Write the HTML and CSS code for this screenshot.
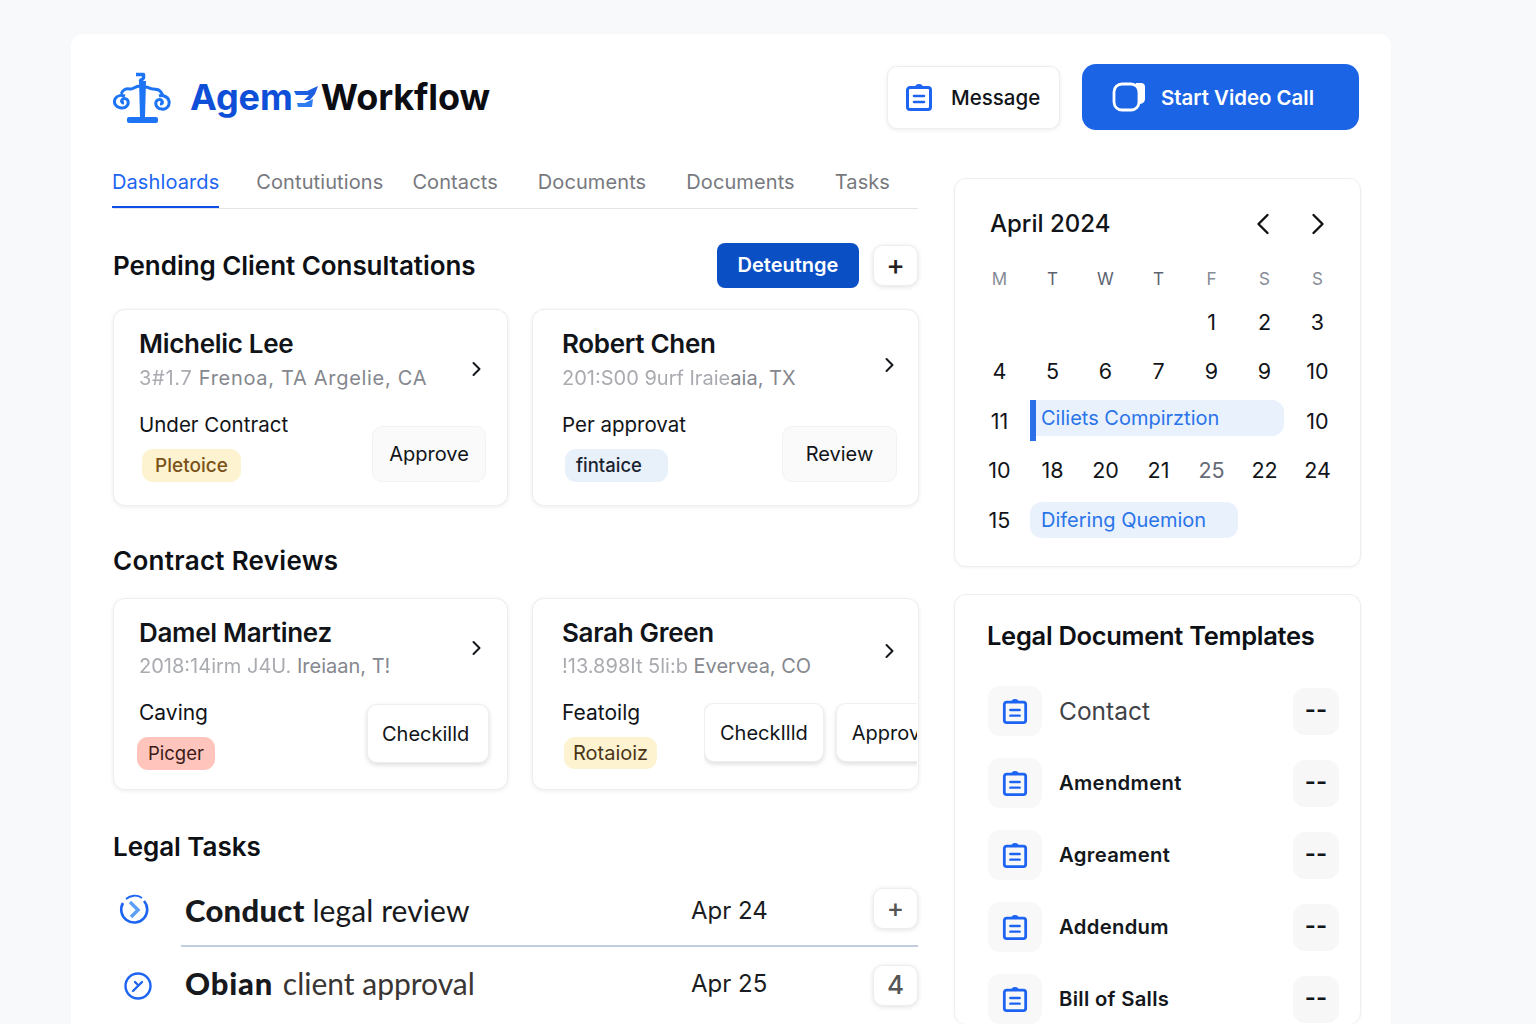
FILE: index.html
```html
<!DOCTYPE html>
<html lang="en">
<head>
    <meta charset="UTF-8">
    <meta name="viewport" content="width=device-width, initial-scale=1.0">
    <title>Agem Workflow</title>
    <link rel="stylesheet" href="styles.css">
</head>
<body>
    <svg class="defs" width="0" height="0" aria-hidden="true">
        <symbol id="clip" viewBox="0 0 28 28">
            <path d="M5 4.500h18a2.500 2.500 0 0 1 2.500 2.500v17a2.500 2.500 0 0 1-2.500 2.500H5A2.500 2.500 0 0 1 2.500 24V7A2.500 2.500 0 0 1 5 4.500z" fill="none" stroke="#1d64f2" stroke-width="3"/>
            <path d="M10 5a4 4 0 0 1 8 0z" fill="#1d64f2"/>
            <path d="M9 13h10M9 19h10" fill="none" stroke="#1d64f2" stroke-width="2.600" stroke-linecap="round"/>
        </symbol>
        <symbol id="chev" viewBox="0 0 12 16">
            <path d="M2.500 2l6 6-6 6" fill="none" stroke="currentColor" stroke-width="2" stroke-linecap="round" stroke-linejoin="round"/>
        </symbol>
    </svg>

    <div class="panel">
        <header class="top">
            <div class="brand">
                <svg class="brand-icon" width="58" height="52" viewBox="0 0 58 52">
                    <path d="M23 2.500h7.500v3.500l-3 2.500h3" fill="none" stroke="#1d74f5" stroke-width="3.500" stroke-linejoin="round"/>
                    <path d="M26 9h7l-1 36h-5z" fill="#1d74f5"/>
                    <rect x="14" y="45" width="31" height="6" rx="2" fill="#1d74f5"/>
                    <path d="M27 14c-5 0-6 3-9 3-2 0-5-1-7 1-2 1-2 3-3 4" fill="none" stroke="#1d74f5" stroke-width="3"/>
                    <path d="M32 15c4 0 5 2 8 2 3 0 5 0 7 2s2 3 3 5" fill="none" stroke="#1d74f5" stroke-width="3"/>
                    <path d="M12 24c-3-1-8-1-10 3-2 5 2 9 7 9 4 0 7-3 6-7-1-3-5-3-6-1-1 1 0 3 2 3" fill="none" stroke="#1d74f5" stroke-width="3"/>
                    <path d="M46 24c3-1 9 0 10 5 1 5-3 9-7 8-4 0-7-3-6-7 1-3 5-3 6-1 1 2 0 3-2 3" fill="none" stroke="#1d74f5" stroke-width="3"/>
                </svg>
                <div class="brand-name">
                    <span class="brand-blue">Agem</span>
                    <svg class="brand-mark" width="26" height="26" viewBox="0 0 26 26">
                        <path d="M1 7h13L25 2l-3 8-5 6h-6l5-5H3z" fill="#1d5fe0"/>
                        <path d="M4 19h8l8-4-1 8H5z" fill="#2f7bf0"/>
                    </svg>
                    <span>Workflow</span>
                </div>
            </div>
            <div class="top-actions">
                <button class="btn-message">
                    <svg width="28" height="28"><use href="#clip"/></svg>
                    Message
                </button>
                <button class="btn-video">
                    <svg width="34" height="30" viewBox="0 0 34 30">
                        <path d="M24 2h5a3 3 0 0 1 3 3v12a4 4 0 0 1-4 4" fill="#fff" stroke="#fff" stroke-width="2"/>
                        <rect x="2" y="2" width="25" height="26" rx="8" fill="#1c64e6" stroke="#fff" stroke-width="2.800"/>
                    </svg>
                    Start Video Call
                </button>
            </div>
        </header>

        <div class="columns">
            <main class="left">
                <nav class="tabs">
                    <a class="tab tab-first active" href="#">Dashloards</a>
                    <a class="tab tab-tight" href="#">Contutiutions</a>
                    <a class="tab" href="#">Contacts</a>
                    <a class="tab" href="#">Documents</a>
                    <a class="tab" href="#">Documents</a>
                    <a class="tab" href="#">Tasks</a>
                </nav>

                <div class="section-head">
                    <h2>Pending Client Consultations</h2>
                    <div class="section-actions">
                        <button class="btn-primary">Deteutnge</button>
                        <button class="btn-icon">+</button>
                    </div>
                </div>

                <div class="cards">
                    <div class="card">
                        <div class="card-head">
                            <div>
                                <div class="name">Michelic Lee</div>
                                <div class="addr addr-wide"><span class="smudge">3#1.7</span> Frenoa, TA Argelie, CA</div>
                            </div>
                            <svg class="chev chev-a" width="12" height="16"><use href="#chev"/></svg>
                        </div>
                        <div class="card-foot">
                            <div>
                                <div class="status">Under Contract</div>
                                <span class="tag tag-yellow">Pletoice</span>
                            </div>
                            <button class="btn-soft">Approve</button>
                        </div>
                    </div>
                    <div class="card card-wide">
                        <div class="card-head">
                            <div>
                                <div class="name">Robert Chen</div>
                                <div class="addr"><span class="smudge">201:S00 9urf Iraie</span>aia, TX</div>
                            </div>
                            <svg class="chev chev-b" width="12" height="16"><use href="#chev"/></svg>
                        </div>
                        <div class="card-foot">
                            <div>
                                <div class="status">Per approvat</div>
                                <span class="tag tag-blue">fintaice</span>
                            </div>
                            <button class="btn-soft btn-review">Review</button>
                        </div>
                    </div>
                </div>

                <h2 class="section-title">Contract Reviews</h2>

                <div class="cards">
                    <div class="card card-short">
                        <div class="card-head">
                            <div>
                                <div class="name">Damel Martinez</div>
                                <div class="addr"><span class="smudge">2018:14irm J4U.</span> Ireiaan, T!</div>
                            </div>
                            <svg class="chev chev-c" width="12" height="16"><use href="#chev"/></svg>
                        </div>
                        <div class="card-foot">
                            <div>
                                <div class="status">Caving</div>
                                <span class="tag tag-red">Picger</span>
                            </div>
                            <button class="btn-raised btn-check">Checkilld</button>
                        </div>
                    </div>
                    <div class="card card-wide card-short">
                        <div class="card-head">
                            <div>
                                <div class="name">Sarah Green</div>
                                <div class="addr"><span class="smudge">!13.898It 5li:b</span> Evervea, CO</div>
                            </div>
                            <svg class="chev chev-d" width="12" height="16"><use href="#chev"/></svg>
                        </div>
                        <div class="card-foot">
                            <div>
                                <div class="status">Featoilg</div>
                                <span class="tag tag-yellow tag-dark">Rotaioiz</span>
                            </div>
                            <div class="foot-buttons">
                                <button class="btn-raised">CheckIlld</button>
                                <button class="btn-raised">Approve</button>
                            </div>
                        </div>
                    </div>
                </div>

                <h2 class="section-title tasks-title">Legal Tasks</h2>

                <div class="task task-line">
                    <span class="task-icon">
                        <svg width="32" height="32" viewBox="0 0 32 32">
                            <path d="M5 9A13 13 0 1 0 26 7" fill="none" stroke="#1d64f2" stroke-width="2.600"/>
                            <path d="M8 5a13 13 0 0 1 16-1" fill="none" stroke="#1d64f2" stroke-width="1.800"/>
                            <path d="M12 8l8 8-7 7" fill="none" stroke="#5fa0f7" stroke-width="3.500"/>
                        </svg>
                    </span>
                    <div class="task-text"><b>Conduct</b> legal review</div>
                    <div class="task-date">Apr 24</div>
                    <button class="btn-icon btn-task">+</button>
                </div>
                <div class="task task-second">
                    <span class="task-icon task-icon-low">
                        <svg width="30" height="30" viewBox="0 0 30 30">
                            <circle cx="15" cy="15" r="12.500" fill="none" stroke="#1d64f2" stroke-width="2.400"/>
                            <path d="M10 20l9-9M12 11l2 2" fill="none" stroke="#1d64f2" stroke-width="2.400" stroke-linecap="round"/>
                        </svg>
                    </span>
                    <div class="task-text task-text-soft"><b>Obian</b> client approval</div>
                    <div class="task-date">Apr 25</div>
                    <button class="btn-icon btn-task">4</button>
                </div>
            </main>

            <aside class="right">
                <section class="box calendar">
                    <div class="cal-head">
                        <div class="cal-title">April 2024</div>
                        <div class="cal-arrows">
                            <svg width="14" height="22" viewBox="0 0 14 22"><path d="M11.500 2l-9 9 9 9" fill="none" stroke="#111" stroke-width="2.400" stroke-linecap="round" stroke-linejoin="round"/></svg>
                            <svg width="14" height="22" viewBox="0 0 14 22"><path d="M2.500 2l9 9-9 9" fill="none" stroke="#111" stroke-width="2.400" stroke-linecap="round" stroke-linejoin="round"/></svg>
                        </div>
                    </div>
                    <div class="cal-grid cal-week">
                        <span class="wd-light">M</span><span>T</span><span>W</span><span>T</span><span class="wd-light">F</span><span class="wd-light">S</span><span class="wd-light">S</span>
                    </div>
                    <div class="cal-grid cal-days">
                        <span></span><span></span><span></span><span></span><span>1</span><span>2</span><span>3</span>
                        <span>4</span><span>5</span><span>6</span><span>7</span><span>9</span><span>9</span><span>10</span>
                        <span>11</span><div class="event event-bar">Ciliets Compirztion</div><span>10</span>
                        <span>10</span><span>18</span><span>20</span><span>21</span><span class="muted">25</span><span>22</span><span>24</span>
                        <span>15</span><div class="event event-short">Difering Quemion</div>
                    </div>
                </section>

                <section class="box templates">
                    <h3>Legal Document Templates</h3>
                    <div class="tpl">
                        <span class="tpl-icon"><svg width="26" height="28"><use href="#clip"/></svg></span>
                        <span class="tpl-name tpl-plain">Contact</span>
                        <span class="tpl-more">--</span>
                    </div>
                    <div class="tpl">
                        <span class="tpl-icon"><svg width="26" height="28"><use href="#clip"/></svg></span>
                        <span class="tpl-name">Amendment</span>
                        <span class="tpl-more">--</span>
                    </div>
                    <div class="tpl">
                        <span class="tpl-icon"><svg width="26" height="28"><use href="#clip"/></svg></span>
                        <span class="tpl-name">Agreament</span>
                        <span class="tpl-more">--</span>
                    </div>
                    <div class="tpl">
                        <span class="tpl-icon"><svg width="26" height="28"><use href="#clip"/></svg></span>
                        <span class="tpl-name">Addendum</span>
                        <span class="tpl-more">--</span>
                    </div>
                    <div class="tpl">
                        <span class="tpl-icon"><svg width="26" height="28"><use href="#clip"/></svg></span>
                        <span class="tpl-name">Bill of Salls</span>
                        <span class="tpl-more">--</span>
                    </div>
                </section>
            </aside>
        </div>
    </div>
</body>
</html>
```

FILE: styles.css
```css
* {
    box-sizing: border-box;
}
html, body {
    height: 1024px;
    overflow: hidden;
}
body {
    margin: 0;
    padding: 34px 0 0 71px;
    font-family: Inter, "Liberation Sans", sans-serif;
    background-color: #f8f9fb;
    color: #111418;
}
button {
    font-family: inherit;
    cursor: pointer;
}
.defs {
    position: absolute;
}
.panel {
    width: 1320px;
    height: 990px;
    padding: 30px 30px 0 42px;
    background-color: #ffffff;
    border-radius: 12px 12px 0 0;
    overflow: hidden;
}

/* header */
.top {
    display: flex;
    justify-content: space-between;
    align-items: center;
    height: 66px;
    padding-right: 2px;
}
.brand {
    display: flex;
    align-items: center;
    gap: 19px;
}
.brand-icon {
    margin-top: 2px;
}
.brand-name {
    display: flex;
    align-items: center;
    font-size: 36px;
    font-weight: 700;
    letter-spacing: -0.1px;
    color: #0b0d12;
}
.brand-blue {
    color: #0f4fd8;
}
.brand-mark {
    margin: 0 2px 0 0;
}
.top-actions {
    display: flex;
    align-items: center;
    gap: 22px;
}
.btn-message {
    display: flex;
    align-items: center;
    gap: 18px;
    width: 173px;
    height: 63px;
    padding: 0 17px;
    font-size: 20.500px;
    font-weight: 500;
    color: #111418;
    background-color: #ffffff;
    border: 1px solid #eceef1;
    border-radius: 10px;
    box-shadow: 0 1px 4px rgba(0, 0, 0, 0.08);
}
.btn-video {
    display: flex;
    align-items: center;
    gap: 15px;
    width: 277px;
    height: 66px;
    padding: 0 30px;
    font-size: 20.400px;
    font-weight: 600;
    color: #ffffff;
    background-color: #1c64e6;
    border: none;
    border-radius: 14px;
}

/* columns */
.columns {
    display: grid;
    grid-template-columns: 805px 407px;
    gap: 36px;
    margin-top: 35px;
}
.tabs {
    display: flex;
    gap: 40px;
    height: 44px;
    border-bottom: 1px solid #e2e4e8;
}
.tab {
    height: 43px;
    padding-top: 4px;
    font-size: 20px;
    line-height: 26px;
    letter-spacing: 0.1px;
    color: #77797e;
    text-decoration: none;
    white-space: nowrap;
}
.tab-first {
    margin: 0 -3px 0 -1px;
}
.tab-tight {
    margin-right: -11px;
}
.tab.active {
    color: #1d64f2;
    border-bottom: 2px solid #0f4fe8;
}
.section-head {
    display: flex;
    justify-content: space-between;
    align-items: center;
    height: 46px;
    margin-top: 33px;
}
h2 {
    margin: 0;
    font-size: 26px;
    font-weight: 600;
    letter-spacing: -0.05px;
    color: #0d1015;
}
.section-title {
    margin: 38px 0 21px;
    line-height: 33px;
    letter-spacing: 0.3px;
}
.tasks-title {
    margin: 40px 0 0;
    letter-spacing: -0.05px;
}
.section-actions {
    display: flex;
    align-items: center;
    gap: 14px;
}
.btn-primary {
    width: 142px;
    height: 45px;
    font-size: 20px;
    font-weight: 600;
    color: #ffffff;
    background-color: #0a4fc4;
    border: none;
    border-radius: 8px;
}
.btn-icon {
    width: 45px;
    height: 41px;
    padding: 0;
    font-size: 28px;
    font-weight: 500;
    line-height: 1;
    color: #222;
    background-color: #ffffff;
    border: 1px solid #eceef1;
    border-radius: 10px;
    box-shadow: 0 1px 5px rgba(0, 0, 0, 0.12);
}

/* client cards */
.cards {
    display: grid;
    grid-template-columns: 395px 387px;
    gap: 24px;
    margin-top: 21px;
}
.section-title + .cards {
    margin-top: 0;
}
.card {
    height: 197px;
    padding: 18px 21px 24px 25px;
    background-color: #ffffff;
    border: 1px solid #eceef1;
    border-radius: 12px;
    box-shadow: 0 1px 4px rgba(0, 0, 0, 0.08);
}
.card-wide {
    padding-left: 29px;
}
.card-short {
    height: 192px;
}
.card-head {
    display: flex;
    justify-content: space-between;
    align-items: flex-start;
    padding-right: 3px;
}
.card-wide .card-head {
    padding-right: 1px;
}
.name {
    font-size: 26px;
    font-weight: 600;
    line-height: 32px;
    letter-spacing: -0.3px;
}
.addr {
    margin-top: 5px;
    font-size: 20px;
    line-height: 26px;
    color: #85888e;
    white-space: nowrap;
}
.addr-wide {
    letter-spacing: 0.7px;
}
.card-short .addr {
    margin-top: 4px;
}
.smudge {
    color: #a9abb0;
    filter: blur(0.6px);
}
.chev {
    color: #14171c;
}
.chev-a {
    margin-top: 33px;
}
.chev-b {
    margin-top: 29px;
}
.chev-c {
    margin-top: 23px;
}
.chev-d {
    margin-top: 26px;
}
.card-foot {
    display: flex;
    justify-content: space-between;
    align-items: flex-end;
    margin-top: 21px;
}
.status {
    font-size: 20.500px;
    line-height: 26px;
}
.card-short .status {
    font-size: 21px;
}
.tag {
    display: inline-block;
    margin: 11px 0 0 3px;
    padding: 0 13px;
    font-size: 19px;
    font-weight: 500;
    line-height: 33px;
    border-radius: 11px;
}
.tag-yellow {
    color: #7a5218;
    background-color: #fdf3d0;
}
.tag-dark {
    color: #4a3518;
    font-size: 20px;
    font-weight: 400;
    line-height: 32px;
    margin-left: 2px;
    padding: 0 9px;
}
.tag-blue {
    color: #1a2430;
    font-size: 18.500px;
    background-color: #e8f0fa;
    padding: 0 26px 0 11px;
}
.tag-red {
    color: #3a1a18;
    font-size: 18.500px;
    font-weight: 400;
    margin-left: -2px;
    background-color: #ffc4bb;
    padding: 0 11px;
}
.btn-soft {
    width: 114px;
    height: 56px;
    padding: 0;
    font-size: 20px;
    color: #111418;
    background-color: #fafafa;
    border: 1px solid #f2f2f3;
    border-radius: 10px;
}
.btn-review {
    width: 115px;
}
.btn-raised {
    flex: none;
    height: 59px;
    padding: 0 15px;
    font-size: 20px;
    color: #111418;
    background-color: #ffffff;
    border: 1px solid #eeeff1;
    border-radius: 10px;
    box-shadow: 0 2px 5px rgba(0, 0, 0, 0.14);
}
.btn-check {
    width: 122px;
    margin: 0 -3px 7px 0;
    padding: 0 0 0 14px;
    text-align: left;
}
.foot-buttons {
    display: flex;
    gap: 12px;
    width: 213px;
    margin-right: -20px;
    padding-bottom: 7px;
    overflow: hidden;
}

/* tasks */
.task {
    display: flex;
    align-items: center;
    height: 72px;
    padding-top: 6px;
}
.task-line {
    position: relative;
    height: 80px;
    margin-top: 4px;
}
.task-line::after {
    content: "";
    position: absolute;
    left: 68px;
    right: 0;
    bottom: 0;
    height: 2px;
    background-color: #c3cde0;
}
.task-second {
    padding-top: 0;
}
.task-icon {
    display: flex;
    width: 72px;
    padding-left: 5px;
}
.task-icon-low {
    padding-left: 10px;
    margin-top: 6px;
}
.task-text {
    width: 506px;
    font-family: Lato, sans-serif;
    font-size: 30px;
    letter-spacing: 0.1px;
    color: #17191d;
}
.task-text b {
    font-size: 31px;
    font-weight: 900;
    letter-spacing: 0.3px;
}
.task-text-soft {
    letter-spacing: 0;
    color: #3a3633;
}
.task-text-soft b {
    letter-spacing: 0.8px;
    margin-right: 2px;
    color: #17191d;
}
.task-date {
    width: 182px;
    font-size: 24px;
    color: #1a1d22;
}
.btn-task {
    color: #555;
    font-size: 26px;
    margin-top: 4px;
}
.task-line .btn-task {
    margin: 0 0 4px;
}

/* right side boxes */
.box {
    background-color: #ffffff;
    border: 1px solid #eceef1;
    border-radius: 12px;
    box-shadow: 0 1px 3px rgba(0, 0, 0, 0.05);
}
.calendar {
    height: 389px;
    margin-top: 13px;
    padding: 27px 18px 0;
}
.cal-head {
    display: flex;
    justify-content: space-between;
    align-items: center;
    padding: 0 17px 0 17px;
}
.cal-title {
    font-size: 24px;
    font-weight: 500;
    line-height: 36px;
}
.cal-arrows {
    display: flex;
    gap: 41px;
}
.cal-grid {
    display: grid;
    grid-template-columns: repeat(7, 53px);
    text-align: center;
}
.cal-week {
    margin-top: 26px;
    font-size: 17px;
    line-height: 22px;
    color: #5c6270;
}
.wd-light {
    color: #868b96;
}
.cal-days {
    grid-auto-rows: 49.500px;
    margin-top: 7px;
    font-size: 21.500px;
    align-items: center;
}
.muted {
    color: #666b78;
}
.event {
    position: relative;
    margin-left: 4px;
    padding-left: 11px;
    font-size: 20px;
    line-height: 36px;
    color: #2a74ea;
    text-align: left;
    background-color: #e9f1fd;
    border-radius: 0 12px 12px 0;
    white-space: nowrap;
}
.event-bar {
    grid-column: 2 / 7;
    margin-right: 7px;
    margin-top: -5px;
}
.event-bar::before {
    content: "";
    position: absolute;
    left: 0;
    top: 0;
    width: 6px;
    height: 41px;
    background-color: #2a6fe8;
}
.event-short {
    grid-column: 2 / 6;
    border-radius: 12px;
}
.templates {
    height: 430px;
    margin-top: 27px;
    padding: 24px 21px 0 32px;
    border-bottom: none;
}
h3 {
    margin: 0 0 33px;
    font-size: 25.500px;
    font-weight: 600;
    line-height: 34px;
    letter-spacing: -0.3px;
    color: #0d1015;
}
.tpl {
    display: flex;
    align-items: center;
    height: 50px;
    margin: 0 0 22px 1px;
}
.tpl-icon {
    display: flex;
    align-items: center;
    justify-content: center;
    width: 54px;
    height: 50px;
    background-color: #f8f8f9;
    border-radius: 12px;
}
.tpl-name {
    flex: 1;
    margin: 0 0 2px 17px;
    font-size: 20.300px;
    font-weight: 600;
    letter-spacing: 0.3px;
    color: #14171c;
}
.tpl-plain {
    margin-bottom: 0;
    font-size: 24.500px;
    font-weight: 400;
    letter-spacing: 0;
    color: #3f4246;
}
.tpl-more {
    width: 46px;
    height: 47px;
    font-size: 24px;
    font-weight: 600;
    line-height: 44px;
    text-align: center;
    background-color: #f7f7f8;
    border-radius: 12px;
}
```
